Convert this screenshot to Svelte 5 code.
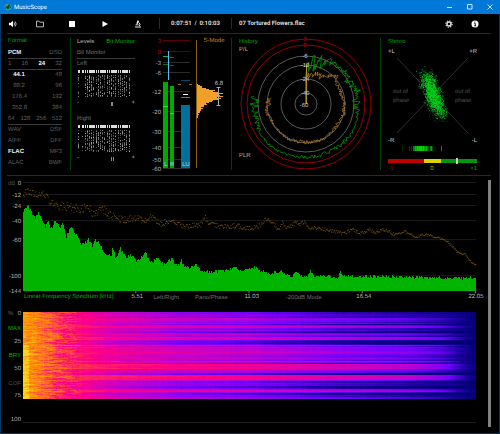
<script>
	import { onMount } from 'svelte';

	// small repeatable random generator so the drawings stay the same
	function seeded(seed) {
		let s = seed;
		return () => {
			s = (s * 16807) % 2147483647;
			return s / 2147483647;
		};
	}

	function lerp(points, x) {
		if (x <= points[0][0]) return points[0][1];
		for (let i = 1; i < points.length; i++) {
			const [x1, y1] = points[i];
			if (x <= x1) {
				const [x0, y0] = points[i - 1];
				return y0 + ((y1 - y0) * (x - x0)) / (x1 - x0);
			}
		}
		return points[points.length - 1][1];
	}

	const format = [
		{ cells: ['PCM', 'DSD'], on: 'PCM', line: true },
		{ cells: ['1', '16', '24', '32'], on: '24', line: true },
		{ cells: ['44.1', '48'], on: '44.1', inset: true },
		{ cells: ['88.2', '96'], inset: true },
		{ cells: ['176.4', '192'], inset: true },
		{ cells: ['352.8', '384'], inset: true },
		{ cells: ['64', '128', '256', '512'], line: true },
		{ cells: ['WAV', 'DSF'] },
		{ cells: ['AIFF', 'DFF'] },
		{ cells: ['FLAC', 'MP3'], on: 'FLAC' },
		{ cells: ['ALAC', 'BWF'] }
	];

	// bit monitor: 24 columns, the second and third stay mostly empty
	function bits(seed) {
		const rnd = seeded(seed);
		const out = [];
		for (let c = 0; c < 24; c++) {
			const x = 1 + c * 2.2;
			if (c === 1) continue;
			out.push({ x, y: 0, h: 3, o: 1 });
			for (let r = 0; r < 22; r++) {
				const odds = c === 0 ? 0.6 : c === 2 ? 0.15 : 0.62;
				if (rnd() < odds) out.push({ x, y: 5 + r, h: 1, o: 0.2 + rnd() * 0.55 });
			}
		}
		return out;
	}

	const channels = [
		{ name: 'Left', bits: bits(71), marks: [29, 30] },
		{ name: 'Right', bits: bits(913), marks: [29, 31] }
	];

	const scale = [
		['3', 6], ['0', 17], ['-3', 28], ['-6', 38], ['-12', 57],
		['-20', 77], ['-30', 97], ['-40', 113], ['-50', 125], ['-60', 134]
	];

	const loudness = [
		1, 3, 5, 5, 9, 12, 18, 16, 22, 26, 22, 23, 26, 20, 24, 21, 16, 15, 12, 9, 10, 7, 7, 4, 6, 4, 4, 3, 3, 1, 2, 1, 1, 1
	];

	const rings = [
		['3', 65, 'red'], ['0', 59, 'red'], ['-6', 48], ['-12', 39], ['-24', 25], ['-40', 11]
	];

	function trace(points, jitter, seed) {
		const rnd = seeded(seed);
		let d = 'M76,70';
		for (let a = 0; a <= 279; a += 1.2) {
			const r = lerp(points, a) + (rnd() - 0.5) * lerp(jitter, a);
			const t = (a * Math.PI) / 180;
			d += `L${(76 + r * Math.sin(t)).toFixed(1)},${(70 - r * Math.cos(t)).toFixed(1)}`;
		}
		return d;
	}

	const peakTrace = trace(
		[[0, 40], [12, 42], [22, 46], [40, 49], [50, 50], [65, 48], [78, 53], [92, 49], [105, 53], [125, 54], [150, 53], [180, 53], [222, 55], [240, 54], [257, 51], [279, 52]],
		[[0, 18], [30, 16], [34, 7], [48, 5], [55, 9], [98, 8], [107, 1], [135, 4], [200, 3], [225, 2], [240, 4], [258, 8], [279, 10]],
		47
	);
	const loudTrace = trace(
		[[0, 29], [15, 31], [30, 31], [48, 41], [60, 36], [80, 37], [105, 39], [130, 37], [160, 39], [185, 38], [210, 39], [235, 38], [250, 38], [258, 42], [268, 38], [279, 37]],
		[[0, 7], [60, 5], [100, 4], [160, 3], [190, 4], [230, 2], [279, 6]],
		129
	);

	function cloud() {
		const rnd = seeded(5);
		const g = () => (rnd() + rnd() + rnd() - 1.5) / 1.5;
		return Array.from({ length: 1900 }, () => {
			const t = rnd() + rnd() * 0.5 - 0.75;
			return {
				x: Math.round((52.5 + t * 11 + g() * 12) * 2) / 2,
				y: Math.round((60.5 + t * 32 + g() * 9) * 2) / 2,
				o: 0.15 + rnd() * 0.5
			};
		});
	}
	const dots = cloud();

	const panning = [[22, 0.2], [29, 0.3], [31, 0.3], [33, 0.7], [34, 0.6], [35, 0.9], [36, 0.8], [37, 1], [38, 0.9], [39, 1], [40, 1], [41, 1], [42, 0.9], [43, 1], [44, 0.8], [45, 0.7], [46, 0.9], [47, 0.5], [48, 0.3], [50, 0.6], [51, 0.8], [52, 0.4], [61, 0.7]];

	const levels = [['0', 6], ['-12', 18], ['-24', 29], ['-40', 44], ['-60', 63], ['-100', 99], ['-144', 114]];

	const spectrum = [
		[0, 38], [1, 31], [4, 29], [7, 34], [10, 40], [12, 42], [15, 35], [18, 43], [22, 50], [25, 45], [27, 53], [32, 44], [36, 51], [39, 47], [43, 60], [47, 51],
		[50, 54], [54, 60], [57, 68], [61, 67], [65, 63], [69, 70], [72, 64], [76, 66], [79, 74], [81, 76], [84, 80], [88, 78], [89, 70], [92, 80],
		[95, 77], [97, 72], [99, 75], [103, 81], [107, 79], [111, 81], [114, 85], [117, 81], [123, 77], [125, 83], [130, 85], [135, 82], [140, 88],
		[144, 86], [148, 82], [151, 87], [156, 89], [158, 85], [161, 90], [167, 92], [172, 88], [177, 93], [186, 96], [192, 95], [199, 94], [207, 93],
		[211, 91], [216, 95], [227, 92], [230, 91], [237, 95], [246, 97], [257, 95], [262, 99], [268, 99], [273, 95], [277, 100], [283, 101], [286, 95], [290, 100],
		[300, 99], [314, 102], [316, 95], [320, 100], [360, 100], [400, 101], [440, 102], [452, 101]
	];
	const peaks = [
		[0, 23], [2, 14], [7, 16], [12, 19], [17, 16], [22, 20], [27, 26], [34, 29], [44, 30], [52, 32], [59, 33], [65, 29], [71, 40], [78, 31], [84, 37], [92, 42],
		[102, 43], [112, 41], [124, 44], [127, 40], [137, 47], [149, 43], [159, 50], [171, 49], [177, 48], [181, 40], [186, 48], [197, 50], [211, 49], [221, 51],
		[234, 51], [243, 42], [249, 46], [255, 54], [259, 46], [262, 52], [272, 46], [276, 48], [280, 45], [285, 53], [294, 51], [307, 54], [319, 57], [328, 53],
		[336, 57], [346, 53], [351, 57], [359, 53], [371, 58], [381, 55], [391, 60], [401, 58], [414, 61], [424, 66], [434, 76], [441, 78], [447, 85], [453, 89]
	];

	function spectrumPath() {
		const rnd = seeded(37);
		let d = 'M15,115';
		for (let x = 0; x < 452; x++) {
			const y = lerp(spectrum, x) + (rnd() - 0.45) * (x < 160 ? 4 : 3);
			d += `V${y.toFixed(1)}H${16 + x}`;
		}
		return d + 'V115Z';
	}

	function peakDots() {
		const rnd = seeded(88);
		const out = [];
		for (let x = 0; x < 452; x += 0.75) {
			const spread = lerp([[0, 8], [70, 9], [110, 6], [200, 5], [280, 4], [360, 3], [452, 2]], x);
			out.push([15 + x, lerp(peaks, x) + (rnd() - 0.5) * spread]);
		}
		return out;
	}
	const peakPoints = peakDots();

	const ticks = [
		{ hz: '5.51', modes: [] },
		{ hz: '11.03', modes: ['Left/Right', 'Pano/Phase'] },
		{ hz: '16.54', modes: ['-200dB Mode'] },
		{ hz: '22.05', modes: [] }
	];

	const timeline = [['0'], ['MAX', 'on'], ['25'], ['BRY', 'on'], ['50'], ['COF', 'off'], ['75']];

	// [first row, loudness] bands of the waterfall
	const bands = [
		[0, 0.15], [2, 0.25], [5, 0.1], [6, 0.6], [7, 0.5], [9, 0.5], [10, 0.25], [11, 0.45], [12, 0.15], [13, 0.55], [14, 0.7], [16, 0.35], [17, 0.3], [19, 0.05],
		[21, 0.55], [23, 0.35], [25, 0.8], [28, 0.2], [29, 0], [32, 0.2], [33, 0.75], [34, 0.5], [35, 0.65], [37, 0.6], [39, 0.75], [42, 0.5], [45, 0.6],
		[47, 0.45], [49, 0.85], [50, 0.55], [51, 0.1], [52, 0.95], [57, 0.6], [59, 0.45], [61, 0], [63, 1], [68, 0.5], [69, 0.1], [71, 0.3],
		[74, 0], [76, 0.2], [77, 0.5], [78, 0.85], [80, 0.4], [81, 0.05], [83, 0.3], [85, 0.45]
	];
	const quiet = [[0, 0.86], [0.04, 0.76], [0.08, 0.64], [0.14, 0.52], [0.2, 0.4], [0.35, 0.25], [0.5, 0.19], [0.6, 0.13], [0.7, 0.07], [0.85, 0.02], [1, 0.01]];
	const loud = [[0, 0.88], [0.04, 0.8], [0.1, 0.67], [0.25, 0.61], [0.5, 0.56], [0.7, 0.48], [0.85, 0.42], [0.93, 0.3], [1, 0.03]];
	const heat = [
		[0, [0, 0, 108]], [0.12, [30, 0, 165]], [0.26, [115, 0, 255]], [0.42, [195, 0, 205]], [0.58, [255, 0, 135]], [0.66, [255, 45, 90]], [0.75, [255, 110, 35]], [0.86, [255, 155, 0]], [1, [255, 220, 30]]
	];
	const channel = (v, i) => lerp(heat.map(([p, c]) => [p, c[i]]), v);
	const palette = Array.from({ length: 256 }, (_, i) => [0, 1, 2].map((c) => channel(i / 255, c)));

	let canvas;

	onMount(() => {
		const ctx = canvas.getContext('2d');
		const { width, height } = canvas;
		const img = ctx.createImageData(width, height);
		const rnd = seeded(2024);
		const columns = Array.from({ length: width }, () => (rnd() - 0.5) * 0.03);
		for (let y = 0; y < height; y++) {
			const level = bands.findLast(([from]) => from <= y)[1] + (rnd() - 0.5) * 0.12;
			let drift = 0;
			for (let x = 0; x < width; x++) {
				const f = x / width;
				const q = lerp(quiet, f);
				drift = drift * 0.8 + (rnd() - 0.5) * (f < 0.12 ? 0.1 : 0.025);
				let v = q + (lerp(loud, f) - q) * level + (drift + columns[x]) * (1 - f * 0.7);
				if (x < 6 && y > 32) v += 0.1;
				const rgb = palette[Math.max(0, Math.min(255, Math.round(v * 255)))];
				img.data.set([...rgb, 255], (y * width + x) * 4);
			}
		}
		ctx.putImageData(img, 0, 0);
	});
</script>

<div class="window">
	<header class="titlebar">
		<svg class="logo" viewBox="0 0 8 8" aria-hidden="true">
			<circle cx="4" cy="4" r="3.6" fill="#2b9c8e" />
			<path d="M1.5 5.5 3 3 4 6 5 1.5 6.5 5" fill="none" stroke="#123c40" />
		</svg>
		<span>MusicScope</span>
		<div class="controls">
			<button aria-label="Minimize"><svg viewBox="0 0 6 6"><path d="M0 3.5h5" /></svg></button>
			<button aria-label="Maximize"><svg viewBox="0 0 6 6"><path d="M.5 .5h4.5v4.5h-4.5z" /></svg></button>
			<button aria-label="Close"><svg viewBox="0 0 6 6"><path d="M.5 .5l5 5M5.5 .5l-5 5" /></svg></button>
		</div>
	</header>

	<nav class="toolbar">
		<div class="tools">
			<button aria-label="Volume">
				<svg viewBox="0 0 8 8"><path d="M0 2.7h1.8L4 .8v6.4L1.8 5.3H0z" fill="#fff" /><path d="M5 2.4q1 1.6 0 3.2M6.2 1.4q1.8 2.6 0 5.2" fill="none" stroke="#ddd" stroke-width=".8" /></svg>
			</button>
			<button aria-label="Open">
				<svg viewBox="0 0 8 8"><path d="M.5 6.8V1.2h2.6l.7 1h3.7v4.6z" fill="none" stroke="#ccc" stroke-width=".9" /></svg>
			</button>
			<button aria-label="Stop"><svg viewBox="0 0 8 8"><path d="M1 1h6v6H1z" fill="#fff" /></svg></button>
			<button aria-label="Play"><svg viewBox="0 0 8 8"><path d="M1.5 1 7 4 1.5 7z" fill="#fff" /></svg></button>
			<button aria-label="Analyse">
				<svg viewBox="0 0 8 8"><path d="M3.6 .2 5 .9 3.7 4 2.4 3.4z" fill="#fff" /><path d="M4.8 2.6q2.2 1.4.6 3.4M1.6 4.8h3M1 7h6" fill="none" stroke="#fff" stroke-width=".9" /></svg>
			</button>
		</div>
		<div class="time"><span>0:07:51</span><span>/</span><span>0:10:03</span></div>
		<span class="track">07 Tortured Flowers.flac</span>
		<div class="extras">
			<button aria-label="Settings">
				<svg viewBox="0 0 8 8"><circle cx="4" cy="4" r="2" fill="none" stroke="#ddd" stroke-width="1.5" /><circle cx="4" cy="4" r="3.2" fill="none" stroke="#ddd" stroke-width="1.1" stroke-dasharray="1.3 1.2" /></svg>
			</button>
			<button aria-label="Info">
				<svg viewBox="0 0 8 8"><circle cx="4" cy="4" r="3.5" fill="#fff" /><path d="M3.3 3.4h1v2.4M3.1 5.8h2M3.8 1.6v1" fill="none" stroke="#000" stroke-width=".9" /></svg>
			</button>
		</div>
	</nav>

	<main>
		<div class="instruments">
			<section class="format">
				<h2>Format</h2>
				{#each format as row}
					<div class="row" class:line={row.line} class:inset={row.inset}>
						{#each row.cells as cell}
							<span class:on={cell === row.on}>{cell}</span>
						{/each}
					</div>
				{/each}
			</section>

			<section class="monitor">
				<div class="tabs">
					<button>Levels</button>
					<button class="active">Bit Monitor</button>
				</div>
				<div class="row line">Bit Monitor</div>
				{#each channels as ch}
					<div class="channel">
						<div class="row">{ch.name}</div>
						<svg viewBox="0 0 58 28" shape-rendering="crispEdges" aria-hidden="true">
							{#each ch.bits as b}
								<rect x={b.x} y={b.y} width={b.h > 1 ? 1.6 : 1} height={b.h} fill="#ddd" opacity={b.o} />
							{/each}
						</svg>
						<div class="row bias">
							<span>-</span>
							<svg viewBox="0 0 44 6" aria-hidden="true">
								{#each ch.marks as m}
									<rect x={m - 1} y="1" width="1" height="4" fill="#888" />
								{/each}
							</svg>
							<span>+</span>
						</div>
					</div>
				{/each}
			</section>

			<section>
				<svg viewBox="0 4 86 132">
					{#each scale as [label, y], i}
						<rect x="18" {y} width="27" height="1" fill={i < 2 ? '#600000' : '#2c2c2c'} />
						<text x="16" y={y + 3} class="end" class:red={i < 2}>{label}</text>
					{/each}
					<rect x="18" y="48" width="5" height="86" fill="#00aa00" />
					<rect x="25" y="52" width="4" height="82" fill="#00aa00" />
					<rect x="18" y="72" width="5" height="1" fill="#00ff00" />
					<rect x="25" y="79" width="4" height="1" fill="#00ff00" />
					<rect x="18" y="22" width="5" height="1" fill="#00b45a" />
					<rect x="25" y="23" width="4" height="1" fill="#007a40" />
					<rect x="18" y="30" width="5" height="1" fill="#007800" />
					<rect x="25" y="31" width="4" height="1" fill="#007800" />
					<rect x="23" y="17" width="1" height="29" fill="#55c3ee" />
					<rect x="36" y="71" width="9" height="63" fill="#00709c" />
					<rect x="36" y="46" width="9" height="1" fill="#004d6e" />
					<path d="M33 50.5h3M44 50.5h3" stroke="#a06a18" />
					<path d="M38 60.5h5" stroke="#fff" />
					<path d="M36 63.5h9" stroke="#a06a18" />
					<text x="19" y="132" class="lit">L</text>
					<text x="25" y="132" class="lit">R</text>
					<text x="37" y="132" class="lit">LU</text>
					<rect x="51" y="6" width="1" height="128" fill="#8c5c14" />
					{#each loudness as w, i}
						<rect x="52" y={50 + i} width={w} height="1" fill="#f0a028" />
					{/each}
					<path d="M73.5 53.5v18M71.5 53.5h4M71.5 71.5h4" stroke="#aaa" fill="none" />
					<text x="74" y="51" class="mid lit">6.8</text>
					<text x="69" y="8" class="mid orange">S-Mode</text>
				</svg>
			</section>

			<section>
				<svg viewBox="2 4 148 132">
					{#each rings as [label, r, tone]}
						<circle cx="76" cy="70" {r} fill="none" stroke={tone ? '#960000' : '#5a5a5a'} />
					{/each}
					<path d={peakTrace} fill="none" stroke="#00a000" stroke-width=".8" />
					<path d={loudTrace} fill="none" stroke="#b07828" stroke-width=".8" />
					<path d="M76.5 70v-40" stroke="#b09028" />
					{#each rings as [label, r, tone]}
						<text x="75" y={72 - r} class="mid" class:red={tone} class:lit={!tone}>{label}</text>
					{/each}
					<text x="74" y="73" class="mid lit">-60</text>
					<text x="9" y="9" class="title">History</text>
					<text x="9" y="17">P/L</text>
					<text x="9" y="123">PLR</text>
				</svg>
			</section>

			<section>
				<svg viewBox="1 4 110 132">
					<path d="M17 24 88 99M88 24 17 99" stroke="#3a3a3a" stroke-width=".8" />
					{#each dots as p}
						<rect x={p.x} y={p.y} width="1" height="1" fill="#00dc1e" opacity={p.o} />
					{/each}
					<text x="8" y="9" class="title">Stereo</text>
					<text x="8" y="19" class="lit">+L</text>
					<text x="97" y="19" class="end lit">+R</text>
					<text x="13" y="59" class="dim">out of</text>
					<text x="13" y="68" class="dim">phase</text>
					<text x="75" y="59" class="dim">out of</text>
					<text x="75" y="68" class="dim">phase</text>
					<text x="8" y="108" class="lit">-R</text>
					<text x="97" y="108" class="end lit">-L</text>
					{#each panning as [x, o]}
						<rect {x} y="112" width="1" height="5" fill="#00d200" opacity={o} />
					{/each}
					<rect x="8" y="125" width="36" height="4" fill="#be0000" />
					<rect x="44" y="125" width="17" height="4" fill="#dcd200" />
					<rect x="61" y="125" width="36" height="4" fill="#00960f" />
					<rect x="76" y="124" width="2" height="6" fill="#ccc" />
					<text x="8" y="136" class="red">-1</text>
					<text x="52" y="136" class="mid yellow">0</text>
					<text x="97" y="136" class="end title">+1</text>
				</svg>
			</section>
		</div>

		<div class="analysis">
			<div class="charts">
				<svg viewBox="0 0 469 118">
					<text x="0" y="9" class="dim">dB</text>
					{#each levels as [label, y]}
						<rect x="15" {y} width="452" height="1" fill="#1c1c1c" />
						<text x="13" y={y + 3} class="end">{label}</text>
					{/each}
					<path d={spectrumPath()} fill="#00b400" shape-rendering="crispEdges" />
					{#each peakPoints as [x, y]}
						<rect {x} {y} width="1" height="1" fill="#966410" opacity=".75" />
					{/each}
					{#each [113, 226, 339, 452] as x}
						<rect x={14 + x} y="115" width="1" height="2" fill="#888" />
					{/each}
				</svg>

				<div class="axis">
					{#each ticks as tick, i}
						<div class="span s{i}">
							{#if i === 0}<h2>Linear Frequency Spectrum [kHz]</h2>{/if}
							{#each tick.modes as mode}
								<button>{mode}</button>
							{/each}
							<span class="hz">{tick.hz}</span>
						</div>
					{/each}
				</div>

				<div class="waterfall">
					<span class="unit">%</span>
					<div class="marks">
						{#each timeline as [label, kind]}
							{#if kind}
								<button class={kind}>{label}</button>
							{:else}
								<span>{label}</span>
							{/if}
						{/each}
					</div>
					<canvas bind:this={canvas} width="452" height="87"></canvas>
					<span class="last">100</span>
					<div class="rule"></div>
				</div>
			</div>
			<div class="scroll"></div>
		</div>
	</main>
</div>

<style>
	:global(body) {
		background: #000;
	}

	.window {
		box-sizing: border-box;
		min-height: 100vh;
		border: 1px solid #003a6b;
		border-top: none;
		background: #000;
		color: #aaa;
		font-family: 'Liberation Sans', Arial, sans-serif;
		font-size: 6px;
		line-height: 11px;
		text-rendering: geometricPrecision;
	}

	button {
		padding: 0;
		border: none;
		background: none;
		color: inherit;
		font: inherit;
		cursor: pointer;
	}

	h2 {
		margin: 0;
		font-size: 6px;
		font-weight: 400;
		color: #00b400;
	}

	svg {
		display: block;
		overflow: visible;
	}

	.titlebar {
		display: flex;
		align-items: center;
		gap: 2px;
		height: 14px;
		margin: 0 -1px;
		padding: 0 7px 0 4px;
		background: #0078d7;
		color: #fff;
		font-family: Roboto, sans-serif;
	}

	.logo {
		width: 8px;
		height: 8px;
	}

	.controls {
		display: flex;
		gap: 14px;
		margin-left: auto;
	}

	.controls svg {
		width: 6px;
		height: 6px;
		fill: none;
		stroke: #fff;
		stroke-width: 0.8;
	}

	.toolbar {
		display: flex;
		align-items: center;
		height: 19px;
		margin: 0 8px 0 6px;
		border-bottom: 1px solid #004600;
		color: #ddd;
		font-family: Roboto, sans-serif;
		font-weight: 700;
	}

	.toolbar svg {
		width: 8px;
		height: 8px;
	}

	.tools {
		display: grid;
		grid-template-columns: 27px 32px 33px 33px 8px;
		padding: 0 17px 0 2px;
	}

	.tools button {
		justify-self: start;
	}

	.time {
		display: flex;
		justify-content: space-between;
		width: 49px;
		padding: 0 11px;
		border: solid #004600;
		border-width: 0 1px;
	}

	.track {
		margin-left: 7px;
	}

	.extras {
		display: flex;
		gap: 18px;
		margin: 0 12px 0 auto;
	}

	main {
		margin: 0 8px 0 6px;
	}

	.instruments {
		display: grid;
		grid-template-columns: 64fr 74fr 87fr 149fr 110fr;
		padding: 4px 0 5px;
		border-bottom: 1px solid #004600;
	}

	section {
		border-right: 1px solid #004000;
	}

	section:last-child,
	.monitor {
		border-right: none;
	}

	.format {
		padding: 0 8px 0 1px;
		color: #606060;
	}

	.format h2 {
		margin-bottom: 3px;
		line-height: 7px;
		color: #00a000;
	}

	.row {
		display: flex;
		justify-content: space-between;
		box-sizing: border-box;
		height: 11px;
	}

	.line {
		border-bottom: 1px solid #3a3a3a;
	}

	.inset {
		padding-left: 4px;
	}

	.inset span:first-child {
		width: 14px;
		text-align: center;
	}

	.on {
		color: #eee;
		font-weight: 700;
	}

	.monitor {
		padding: 0 10px 0 6px;
		color: #707070;
	}

	.tabs {
		display: flex;
		justify-content: space-between;
		margin-bottom: 3px;
		line-height: 7px;
		color: #bbb;
	}

	.active {
		color: #00b400;
	}

	.channel {
		margin-bottom: 5px;
	}

	.channel:last-child {
		margin-bottom: 0;
	}

	.bias {
		align-items: center;
		color: #aaa;
	}

	.bias svg {
		width: 44px;
		height: 6px;
	}

	text {
		font-size: 6px;
		fill: #b4b4b4;
	}

	.end {
		text-anchor: end;
	}

	.mid {
		text-anchor: middle;
	}

	.lit {
		fill: #ccc;
	}

	.dim {
		fill: #505050;
	}

	.red {
		fill: #be0000;
	}

	.orange {
		fill: #c88520;
	}

	.yellow {
		fill: #b0a800;
	}

	.title {
		fill: #00a800;
	}

	.analysis {
		display: flex;
		justify-content: space-between;
		gap: 10px;
	}

	.charts {
		flex: 1;
		padding-left: 1px;
	}

	.scroll {
		width: 3px;
		margin: 4px 0;
		background: #808080;
	}

	.axis {
		display: grid;
		grid-template-columns: repeat(4, 1fr);
		height: 9px;
		margin: -1px 2px 10px 15px;
		line-height: 9px;
	}

	.span {
		display: flex;
		gap: 16px;
		color: #707070;
		white-space: nowrap;
	}

	.s0 {
		padding-left: 1px;
	}

	.s1 {
		padding-left: 16px;
	}

	.s2 {
		padding-left: 34px;
	}

	.hz {
		width: 16px;
		margin: 0 -8px 0 auto;
		text-align: center;
		color: #bbb;
	}

	.waterfall {
		display: grid;
		grid-template-columns: 4px 9px 1fr;
		grid-template-rows: 87px 24px;
		padding-bottom: 8px;
	}

	.unit {
		line-height: 5px;
		color: #666;
	}

	.marks {
		display: flex;
		flex-direction: column;
		justify-content: space-between;
		align-items: flex-end;
		line-height: 5px;
	}

	.marks .on {
		color: #00b400;
		font-weight: 400;
	}

	.marks .off {
		color: #505050;
	}

	canvas {
		display: block;
		width: calc(100% - 4px);
		height: 87px;
		margin-left: 2px;
	}

	.last {
		grid-column: 1 / 3;
		align-self: end;
		text-align: right;
		line-height: 5px;
	}

	.rule {
		margin: 0 2px;
		border-bottom: 1px solid #1c1c1c;
	}
</style>
